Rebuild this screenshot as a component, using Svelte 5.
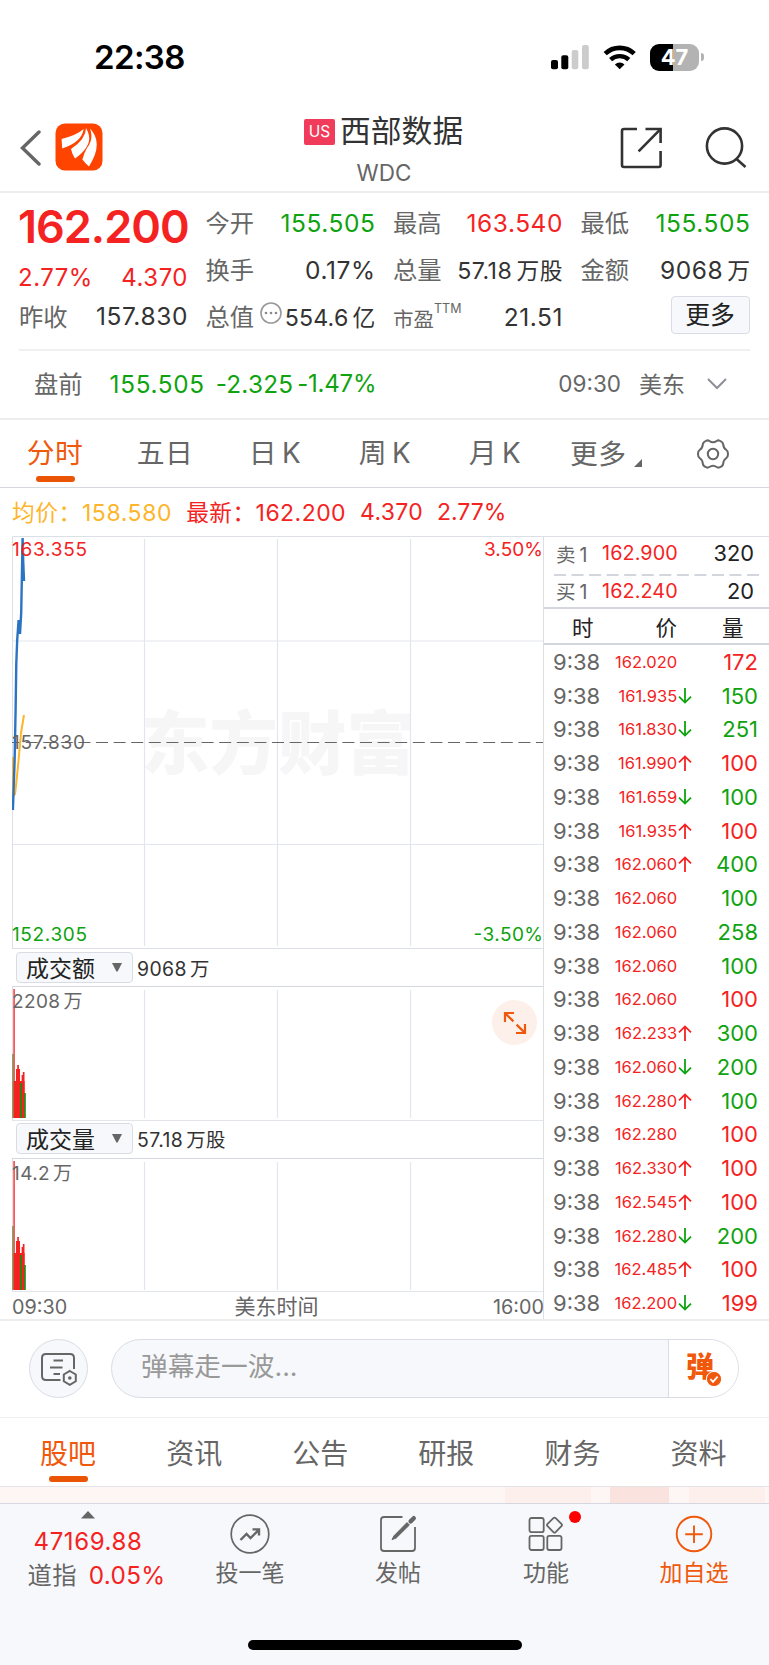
<script>
const stats = [
	[
		{ label: "今开", value: "155.505", color: "green" },
		{ label: "换手", value: "0.17%" },
		{ label: "总值", value: "554.6", unit: "亿", dots: true, small: true },
	],
	[
		{ label: "最高", value: "163.540", color: "red" },
		{ label: "总量", value: "57.18", unit: "万股", small: true },
		{ label: "市盈", sup: "TTM", value: "21.51" },
	],
	[
		{ label: "最低", value: "155.505", color: "green" },
		{ label: "金额", value: "9068", unit: "万" },
		{ more: true },
	],
];

const periods = ["分时", "五日", "日K", "周K", "月K"];

// price, direction of the tick, volume, color of the volume
const ticks = [
	["162.020", "", 172, "red"],
	["161.935", "down", 150, "green"],
	["161.830", "down", 251, "green"],
	["161.990", "up", 100, "red"],
	["161.659", "down", 100, "green"],
	["161.935", "up", 100, "red"],
	["162.060", "up", 400, "green"],
	["162.060", "", 100, "green"],
	["162.060", "", 258, "green"],
	["162.060", "", 100, "green"],
	["162.060", "", 100, "red"],
	["162.233", "up", 300, "green"],
	["162.060", "down", 200, "green"],
	["162.280", "up", 100, "green"],
	["162.280", "", 100, "red"],
	["162.330", "up", 100, "red"],
	["162.545", "up", 100, "red"],
	["162.280", "down", 200, "green"],
	["162.485", "up", 100, "red"],
	["162.200", "down", 199, "red"],
];

const indicators = [
	{ name: "成交额", value: "9068", unit: "万", max: "2208", zoom: true },
	{ name: "成交量", value: "57.18", unit: "万股", max: "14.2" },
];

// x, width, height, color
const bars = [
	[0.3, 1.4, 64, "#3a9a2e"],
	[1.2, 1.8, 129, "#f85a5a"],
	[1.6, 11, 37, "#f52222"],
	[4, 4, 49, "#f52222"],
	[5.2, 1.7, 53, "#f52222"],
	[9.6, 2, 43, "#f52222"],
	[10.8, 1.7, 46, "#f52222"],
	[8, 1.8, 35, "#1c8a10"],
	[12.2, 1.6, 25, "#1c8a10"],
];

const sections = ["股吧", "资讯", "公告", "研报", "财务", "资料"];
</script>

<div class="page">
	<div class="status">
		<div class="clock">22:38</div>
		<svg class="signal" width="39" height="25" viewBox="0 0 39 25">
			<rect x="0" y="15" width="7" height="9.3" rx="2" />
			<rect x="10.3" y="10.3" width="7" height="14" rx="2" />
			<rect x="20.7" y="5" width="6.6" height="19.3" rx="2" fill="#ccc" />
			<rect x="31" y="0" width="6.8" height="24.3" rx="2" fill="#ccc" />
		</svg>
		<svg class="wifi" width="34" height="25" viewBox="0 0 34 25">
			<path d="M2.2 8.7 A21 21 0 0 1 31.2 8.7" fill="none" stroke="#000" stroke-width="4.6" />
			<path d="M7.6 14.7 A13.4 13.4 0 0 1 25.8 14.7" fill="none" stroke="#000" stroke-width="4.4" />
			<path d="M16.7 24.3 L11.9 19.4 A7 7 0 0 1 21.5 19.4 Z" />
		</svg>
		<div class="battery">47</div>
		<div class="nub"></div>
	</div>

	<header>
		<svg class="back" width="22" height="36" viewBox="0 0 22 36">
			<path d="M19 2 L2.5 18 L19 34" fill="none" stroke="#666" stroke-width="3.4" stroke-linecap="round" />
		</svg>
		<svg class="logo" width="48" height="48" viewBox="0 0 48 48">
			<rect x="0.5" y="0.5" width="47" height="47" rx="9.5" fill="#ff4400" />
			<path d="M6.6 16 Q22 12 28.6 6 Q27 19 7.2 25.4 Z" fill="#fff" />
			<path d="M31 5 Q31 16 16 26 Q17 31 20 35.6 Q36 24 34 13 Q33 8 31 5 Z" fill="#fff" />
			<path d="M35 5.4 Q39 16 32 25 Q29 30 27.4 36.4 Q30 40 34 43.4 Q49 20 35 5.4 Z" fill="#fff" />
		</svg>
		<div class="title">
			<div class="name"><span class="us">US</span><span>西部数据</span></div>
			<div class="code">WDC</div>
		</div>
		<svg class="share" width="42" height="42" viewBox="0 0 42 42" fill="none" stroke="#333" stroke-width="2.6">
			<path d="M17 2 H4 Q2 2 2 4 V38 Q2 40 4 40 H38.6 Q40.6 40 40.6 38 V24" />
			<path d="M25.5 2 H40.6 V16" />
			<path d="M40 2.6 L18.6 24.4" />
		</svg>
		<svg class="search" width="42" height="42" viewBox="0 0 42 42" fill="none" stroke="#333" stroke-width="2.6">
			<circle cx="19.5" cy="19" r="17.6" />
			<path d="M31.5 32 L40.5 40" />
		</svg>
	</header>

	<section class="quote">
		<div class="columns">
			<div class="main">
				<div class="price red">162.200</div>
				<div class="change red"><span>2.77%</span><span>4.370</span></div>
				<div class="stat"><span class="label">昨收</span><span class="value">157.830</span></div>
			</div>
			{#each stats as column}
				<div class="column">
					{#each column as s}
						<div class="stat">
							{#if s.more}
								<button class="more">更多</button>
							{:else}
								<span class="label" class:pe={s.sup}>{s.label}{#if s.sup}<i>{s.sup}</i>{/if}</span>
								{#if s.dots}
									<svg class="dots" width="22" height="22" viewBox="0 0 22 22">
										<circle cx="11" cy="11" r="10" fill="none" stroke="#999" stroke-width="1.6" />
										<circle cx="6" cy="11" r="1.3" fill="#888" />
										<circle cx="11" cy="11" r="1.3" fill="#888" />
										<circle cx="16" cy="11" r="1.3" fill="#888" />
									</svg>
								{/if}
								<span class="value {s.color}" class:small={s.small}>{s.value}{#if s.unit}<b>{s.unit}</b>{/if}</span>
							{/if}
						</div>
					{/each}
				</div>
			{/each}
		</div>
		<div class="premarket">
			<span class="label">盘前</span>
			<span class="green p1">155.505</span>
			<span class="green p2">-2.325</span>
			<span class="green p3">-1.47%</span>
			<span class="open">09:30</span>
			<span class="zone">美东</span>
			<svg width="22" height="14" viewBox="0 0 22 14">
				<path d="M2 2 L11 11 L20 2" fill="none" stroke="#8e8e96" stroke-width="2" />
			</svg>
		</div>
	</section>

	<nav class="periods">
		{#each periods as p, i}
			<div class="period" class:active={i == 0}>{p[0]}<span class:latin={p[1] == "K"}>{p[1]}</span></div>
		{/each}
		<div class="period wide">更多<svg width="8" height="8" viewBox="0 0 8 8"><path d="M8 0 V8 H0 Z" fill="#666" /></svg></div>
		<div class="gear">
			<svg width="32" height="30" viewBox="0 0 32 30" fill="none" stroke="#666" stroke-width="2">
				<path d="M9.5 1.6 Q11 1 12.4 2 Q16 4.6 19.6 2 Q21 1 22.5 1.6 Q26 3 26.2 5.4 Q26.4 9 29.4 11 Q31 12 31 15 Q31 18 29.4 19 Q26.4 21 26.2 24.6 Q26 27 22.5 28.4 Q21 29 19.6 28 Q16 25.4 12.4 28 Q11 29 9.5 28.4 Q6 27 5.8 24.6 Q5.6 21 2.6 19 Q1 18 1 15 Q1 12 2.6 11 Q5.6 9 5.8 5.4 Q6 3 9.5 1.6 Z" />
				<circle cx="16" cy="15" r="5.2" />
			</svg>
		</div>
	</nav>

	<div class="summary">
		<span class="avg"><em>均价：</em>158.580</span>
		<span class="red last"><em>最新：</em>162.200</span>
		<span class="red diff">4.370</span>
		<span class="red percent">2.77%</span>
	</div>

	<div class="market">
		<div class="charts">
			<svg class="line" width="531" height="413" viewBox="0 0 531 413">
				<text class="watermark" x="129" y="233" textLength="274" lengthAdjust="spacingAndGlyphs">东方财富</text>
				<path d="M132.5 3 V410 M265.5 3 V410 M398.5 3 V410 M0 105 H532 M0 308.5 H532" stroke="#e2e5ee" stroke-width="1.2" fill="none" />
				<path d="M0.5 413 V0.5 H532 M0 412.5 H532" stroke="#dcdfe6" fill="none" />
				<path d="M0 206.5 H532" stroke="#666" stroke-width="1.2" stroke-dasharray="12 5.6" fill="none" stroke-dashoffset="4" />
				<path d="M0.8 221 L1.2 260 L3 258 L4.2 248 L6.3 227 L9 197 L12 179" stroke="#fdb52b" stroke-width="2" fill="none" />
				<path d="M0.9 274 L2.6 225 L3.6 174 L4.3 127 L5.2 104 L6.6 84 L8 98 L9.2 77 L10.6 2 L11.2 25 L12 45" stroke="#2c73c4" stroke-width="2.4" fill="none" />
				<text class="scale rise" x="0" y="19.5" textLength="75">163.355</text>
				<text class="scale rise" x="472" y="19.5" textLength="59">3.50%</text>
				<text class="scale" x="0" y="212.5" textLength="73">157.830</text>
				<text class="scale fall" x="0" y="405" textLength="75">152.305</text>
				<text class="scale fall" x="461.5" y="405" textLength="69.5">-3.50%</text>
			</svg>
			{#each indicators as ind}
				<div class="indicator">
					<button>{ind.name}<svg width="10" height="9" viewBox="0 0 10 9"><path d="M0 0 H10 L5.6 8.4 H4.4 Z" fill="#666" /></svg></button>
					<span>{ind.value}<b>{ind.unit}</b></span>
				</div>
				<div class="volume">
					<svg width="531" height="133" viewBox="0 0 531 133">
						<path d="M132.5 3 V131 M265.5 3 V131 M398.5 3 V131" stroke="#e2e5ee" stroke-width="1.2" />
						<path d="M0.5 0 V134" stroke="#dcdfe6" />
						{#each bars as [x, w, h, fill]}
							<rect {x} y={131 - h} width={w} height={h} {fill} />
						{/each}
					</svg>
					<span class="max">{ind.max}<b>万</b></span>
					{#if ind.zoom}
						<div class="zoom">
							<svg width="24" height="24" viewBox="0 0 24 24" fill="none" stroke="#f0590c" stroke-width="2.2">
								<path d="M2 11 V2 H11 M2.4 2.4 L10.4 10.4 M22 13 V22 H13 M21.6 21.6 L13.6 13.6" />
							</svg>
						</div>
					{/if}
				</div>
			{/each}
			<div class="axis"><span>09:30</span><span class="tz">美东时间</span><span>16:00</span></div>
		</div>

		<div class="book">
			<div class="order"><span class="side">卖<b>1</b></span><span class="red quoted">162.900</span><span class="size">320</span></div>
			<svg class="dash" width="205" height="2"><path d="M0 1 H205" stroke="#d3d6dc" stroke-width="2" stroke-dasharray="12 5.55" /></svg>
			<div class="order bid"><span class="side">买<b>1</b></span><span class="red quoted">162.240</span><span class="size">20</span></div>
			<div class="heads"><span>时</span><span>价</span><span>量</span></div>
			{#each ticks as [price, dir, vol, color]}
				<div class="tick">
					<span class="time">9:38</span>
					<span class="deal red">{price}</span>
					<svg width="14" height="16" viewBox="0 0 14 16" fill="none" stroke-width="1.8">
						{#if dir == "up"}
							<path d="M7 16 V1.6 M1 7.4 L7 1.4 L13 7.4" stroke="#f52222" />
						{:else if dir == "down"}
							<path d="M7 0 V14.4 M1 8.6 L7 14.6 L13 8.6" stroke="#0fa30f" />
						{/if}
					</svg>
					<span class="vol {color}">{vol}</span>
				</div>
			{/each}
		</div>
	</div>

	<div class="danmu">
		<div class="settings">
			<svg width="38" height="36" viewBox="0 0 38 36" fill="none" stroke="#666" stroke-width="2">
				<path d="M20.5 29 H6 Q2 29 2 25 V7 Q2 3 6 3 H30 Q34 3 34 7 V18" />
				<path d="M13.5 9.6 H23 M10 16.4 H22.5 M13.5 23 H20" />
				<path d="M29.8 20 L35.8 23.5 V30.3 L29.8 33.8 L23.8 30.3 V23.5 Z" />
				<circle cx="29.8" cy="27" r="1.8" fill="#666" stroke="none" />
			</svg>
		</div>
		<div class="input">
			<span class="placeholder">弹幕走一波...</span>
			<div class="send">
				<span>弹</span>
				<svg width="16" height="16" viewBox="0 0 16 16">
					<circle cx="8" cy="8" r="7.6" fill="#f0590c" stroke="#fff" stroke-width="1" />
					<path d="M4.4 8 L7 10.8 L11.6 5.6" fill="none" stroke="#fff" stroke-width="1.8" />
				</svg>
			</div>
		</div>
	</div>

	<nav class="sections">
		{#each sections as s, i}
			<div class:active={i == 0}>{s}</div>
		{/each}
	</nav>
	<div class="banner"><i class="a"></i><i class="b"></i><i class="c"></i></div>

	<footer>
		<div class="index">
			<svg width="14" height="8" viewBox="0 0 14 8"><path d="M7 0 L14 7.5 H0 Z" fill="#666" /></svg>
			<div class="red points">47169.88</div>
			<div class="dow"><span>道指</span><span class="red">0.05%</span></div>
		</div>
		<div class="action">
			<svg width="40" height="40" viewBox="0 0 40 40" fill="none" stroke="#666" stroke-width="1.7">
				<circle cx="20" cy="20" r="18.8" />
				<path d="M10.5 26 L16.5 20 L20.5 24 L28.5 16.2 M22.5 15.4 H29 V21.6" stroke-width="2.4" />
			</svg>
			<span>投一笔</span>
		</div>
		<div class="action">
			<svg width="40" height="40" viewBox="0 0 40 40" fill="none" stroke="#666" stroke-width="1.8">
				<path d="M24.5 3 H6 Q3 3 3 6 V34 Q3 37 6 37 H34 Q37 37 37 34 V13" />
				<path d="M14 25.6 L16 21.8 L29 8.6 L31.4 11 L18.2 24 Z" fill="#666" stroke-width="1" />
				<path d="M32.6 7.4 L35.8 4.2" stroke-width="4.4" stroke-linecap="round" />
			</svg>
			<span>发帖</span>
		</div>
		<div class="action">
			<svg width="40" height="40" viewBox="0 0 40 40" fill="none" stroke="#666" stroke-width="1.8">
				<rect x="3.5" y="4" width="14.2" height="14.2" rx="2" />
				<rect x="3.5" y="21.8" width="14.2" height="14.2" rx="2" />
				<rect x="21.3" y="21.8" width="14.2" height="14.2" rx="2" />
				<rect x="22.8" y="5.4" width="11.4" height="11.4" rx="1.6" transform="rotate(45 28.5 11.1)" />
			</svg>
			<span>功能</span>
			<div class="badge"></div>
		</div>
		<div class="action add">
			<svg width="40" height="40" viewBox="0 0 40 40" fill="none" stroke="#f0590c" stroke-width="1.9">
				<circle cx="20" cy="20" r="17.3" />
				<path d="M20 11.5 V29 M11.2 20.3 H28.8" />
			</svg>
			<span>加自选</span>
		</div>
	</footer>
	<div class="home"><div></div></div>
</div>

<style>
:global(body) {
	background: white;
}

.page {
	width: 769px;
	height: 1665px;
	overflow: hidden;
	display: flex;
	flex-direction: column;
	background: white;
	color: #333;
	font-family: Inter, "Noto Sans CJK SC", sans-serif;
	font-size: 24px;
	white-space: nowrap;
}

.page * {
	box-sizing: border-box;
}

svg {
	display: block;
	flex: none;
}

b, i, em {
	font-weight: inherit;
	font-style: normal;
}

button {
	font: inherit;
	color: inherit;
	background: #f6f8fb;
	border: 1px solid #d9dce4;
	border-radius: 4px;
	padding: 0;
}

.red { color: #f52222; }
.green { color: #0fa30f; }

.status {
	height: 114px;
	display: flex;
	align-items: center;
	padding-left: 94px;
}

.clock {
	width: 457px;
	font-size: 33px;
	font-weight: 600;
	color: black;
	letter-spacing: -0.6px;
}

.wifi {
	margin-left: 13px;
}

.battery {
	width: 49px;
	height: 27px;
	margin-left: 13px;
	border-radius: 9px;
	background: linear-gradient(to right, black 23px, #b3b3b3 23px);
	color: white;
	font-size: 22px;
	font-weight: 700;
	line-height: 27px;
	text-align: center;
}

.nub {
	width: 3px;
	height: 8px;
	margin-left: 2px;
	border-radius: 0 4px 4px 0;
	background: #b3b3b3;
}

header {
	height: 79px;
	display: flex;
	align-items: flex-start;
	border-bottom: 2px solid #ededed;
	padding-left: 20px;
}

.back { margin-top: 16px; }
.logo { margin: 9px 0 0 13px; }

.title {
	width: 160px;
	margin: 0 156px 0 201px;
}

.name {
	display: flex;
	align-items: center;
	height: 36px;
	font-size: 30.8px;
	line-height: 32px;
}

.name span + span {
	margin-top: -2px;
}

.us {
	width: 31px;
	height: 26px;
	margin-right: 5px;
	border-radius: 2px;
	background: #f03c5a;
	color: white;
	font-size: 15.5px;
	line-height: 26px;
	text-align: center;
}

.code {
	height: 44px;
	font-size: 22.5px;
	line-height: 45px;
	text-align: center;
	color: #666;
}

.share { margin-top: 13px; }
.search { margin: 13px 0 0 43px; }

.columns {
	height: 158px;
	margin: 0 19px;
	display: grid;
	grid-template-columns: 168px 169px 169px 169px;
	column-gap: 18.5px;
	border-bottom: 2px solid #f0f0f2;
}

.column, .main {
	padding-top: 6px;
}

.stat {
	height: 47px;
	display: flex;
	align-items: center;
	justify-content: space-between;
}

.label {
	color: #666;
	font-size: 24.3px;
	margin-top: -2px;
}

.label i {
	font-size: 12.5px;
	position: relative;
	top: -14px;
}

.label.pe {
	font-size: 20.5px;
	margin-top: 3px;
}

.value {
	margin-right: -1px;
	font-size: 24.5px;
	letter-spacing: 0.55px;
}

.small {
	font-size: 23.2px;
	letter-spacing: 0.5px;
}

.value b {
	font-size: 22.8px;
	margin-left: 4px;
}

.dots {
	margin: -8px -2px 0 0;
}

.dots + .value {
	margin-left: -1px;
	letter-spacing: 0.2px;
}

.main .stat {
	height: 34px;
}

.main .value {
	letter-spacing: 0.6px;
}

.price {
	margin-left: -1px;
	height: 56px;
	line-height: 56px;
	font-size: 45px;
	font-weight: 600;
	letter-spacing: -1px;
}

.change {
	margin: 0 -1px;
	height: 44px;
	line-height: 45px;
	letter-spacing: 0.5px;
	display: flex;
	justify-content: space-between;
}

.more {
	width: 79px;
	height: 38px;
	margin: -4px 0 0 auto;
	font-size: 24.8px;
	line-height: 34px;
	color: #222;
}

.premarket {
	height: 69px;
	padding: 0 41px 2px 34px;
	display: flex;
	align-items: center;
	border-bottom: 2px solid #ededed;
}

.p1, .p2 {
	font-size: 24.3px;
	letter-spacing: 0.7px;
}

.p1 { margin-left: 27px; }
.p2 { margin-left: 11px; letter-spacing: 0.2px; }
.p3 { margin-left: 4px; letter-spacing: -0.2px; }

.open {
	margin-left: auto;
	color: #666;
	font-size: 22.5px;
}

.zone {
	margin: -2px 21px 0 18px;
	color: #666;
	font-size: 23px;
}

.periods {
	height: 68px;
	display: flex;
	border-bottom: 1px solid #d5d8e0;
	color: #666;
	font-size: 27.8px;
	line-height: 66px;
}

.period {
	width: 110px;
	text-align: center;
	letter-spacing: 0.5px;
}

.period .latin {
	margin-left: 5px;
}

.wide {
	width: 118px;
	display: flex;
	align-items: center;
	padding-left: 20px;
}

.wide svg {
	margin: 18px 0 0 7px;
}

.gear {
	width: 92px;
	display: flex;
	justify-content: center;
	align-items: center;
	padding-right: 3px;
}

.active {
	color: #f0590c;
}

.active::after {
	content: "";
	display: block;
	width: 39px;
	height: 6px;
	margin: -10px auto 0;
	border-radius: 3px;
	background: #e95504;
}

.summary {
	height: 48px;
	padding: 0 0 1px 12px;
	display: flex;
	align-items: center;
	font-size: 23px;
	letter-spacing: 0.6px;
}

.summary em {
	font-size: 22.7px;
}

.avg { color: #fdb52b; }

.last {
	margin-left: 14px;
	letter-spacing: 0.45px;
}

.diff {
	margin: 0 14px;
	letter-spacing: 0.3px;
}

.percent {
	letter-spacing: 0;
}

.market {
	height: 785px;
	display: flex;
	border-bottom: 2px solid #ededed;
}

.charts {
	width: 531px;
	margin-left: 12px;
}

.line text {
	font-size: 19px;
}

.scale { fill: #666; }
.rise { fill: #f52222; }
.fall { fill: #0fa30f; }

.line .watermark {
	font-size: 69px;
	font-weight: 900;
	fill: #f6f6f7;
}

.indicator {
	height: 38px;
	padding: 0 0 1px 4px;
	display: flex;
	align-items: center;
	border-bottom: 1px solid #d5d8e0;
}

.indicator button {
	width: 117px;
	height: 31px;
	padding: 0 10px 1px 9px;
	display: flex;
	align-items: center;
	justify-content: space-between;
	font-size: 23px;
	color: #222;
}

.indicator button svg {
	margin-top: 1px;
}

.indicator span {
	margin-left: 4px;
	font-size: 19.4px;
	letter-spacing: 0.4px;
}

.indicator b, .max b {
	margin-left: 3px;
}

.volume {
	height: 133.5px;
	position: relative;
	border-bottom: 1px solid #e2e5ea;
}

.max {
	position: absolute;
	left: 0;
	top: -1px;
	font-size: 19px;
	letter-spacing: 0.4px;
	color: #666;
}

.zoom {
	position: absolute;
	right: 6px;
	top: 13px;
	width: 45px;
	height: 45px;
	border-radius: 50%;
	background: #fdf0ea;
	display: flex;
	align-items: center;
	justify-content: center;
}

.axis {
	height: 29px;
	display: flex;
	align-items: center;
	justify-content: space-between;
	margin-right: -1px;
	color: #666;
	font-size: 19.8px;
}

.tz {
	margin: -3px 7px 0 0;
	font-size: 21px;
}

.book {
	width: 226px;
	border-left: 1px solid #dcdfe6;
	border-top: 1px solid #dcdfe6;
}

.order {
	height: 37px;
	padding: 0 15px 5px 12px;
	display: flex;
	align-items: center;
}

.order.bid {
	height: 31px;
	padding-bottom: 2px;
}

.side {
	width: 46px;
	font-size: 19.5px;
	color: #666;
}

.side b {
	margin-left: 4px;
}

.quoted {
	font-size: 19.8px;
	letter-spacing: 0.1px;
}

.size {
	margin-left: auto;
	font-size: 21.8px;
	color: #222;
}

.dash {
	margin-left: 10px;
}

.heads {
	height: 38px;
	border-top: 2px solid #d3d6dc;
	border-bottom: 2px solid #d3d6dc;
	padding: 3px 23px 0 28px;
	display: flex;
	align-items: center;
	color: #222;
	font-size: 21.5px;
	line-height: 30px;
}

.heads span:nth-child(2) {
	margin: 0 45px 0 62px;
}

.tick {
	height: 33.75px;
	padding: 0 11px 0 9px;
	display: flex;
	align-items: center;
	font-size: 22px;
}

.time { color: #666; }

.deal {
	width: 77px;
	text-align: right;
	font-size: 16.5px;
}

.tick svg {
	margin-left: 1px;
}

.vol {
	margin-left: auto;
}

.danmu {
	height: 97px;
	padding: 0 30px 1px 29px;
	display: flex;
	align-items: center;
	border-bottom: 1px solid #f0f0f2;
}

.settings {
	width: 59px;
	height: 59px;
	border: 1px solid #d9dce4;
	border-radius: 50%;
	background: #f6f8fb;
	padding: 11px 0 0 10px;
}

.input {
	flex: 1;
	height: 59px;
	margin-left: 23px;
	border: 1px solid #d9dce4;
	border-radius: 30px;
	background: #f6f8fb;
	overflow: hidden;
	display: flex;
	justify-content: space-between;
}

.placeholder {
	padding-left: 29px;
	line-height: 53px;
	font-size: 26.7px;
	color: #999;
}

.send {
	width: 70px;
	background: white;
	border-left: 1px solid #d9dce4;
	position: relative;
	padding-left: 17px;
	line-height: 55px;
	font-size: 28px;
	font-weight: 900;
	color: #f0590c;
}

.send svg {
	position: absolute;
	left: 37px;
	top: 31px;
}

.sections {
	height: 69px;
	padding: 0 5px;
	display: grid;
	grid-template-columns: repeat(6, 126.1px);
	border-bottom: 1px solid #e4e4e8;
	text-align: center;
	color: #666;
	font-size: 28px;
	line-height: 72px;
}

.sections .active::after {
	margin-top: -14px;
}

.banner {
	height: 17px;
	display: flex;
	background: #fef6f4;
	padding-left: 505px;
	border-bottom: 1px solid #d5d8e0;
}

.a { width: 86px; background: #fdefec; }
.b { width: 59px; background: #fae3de; margin: 0 20px 0 19px; }
.c { width: 76px; background: #fdefec; }

footer {
	height: 122px;
	display: flex;
	background: #f6f8fb;
	color: #666;
}

.index {
	width: 176px;
	display: flex;
	flex-direction: column;
	align-items: center;
	padding-top: 7px;
}

.points {
	height: 44px;
	line-height: 45px;
	letter-spacing: 0.6px;
}

.dow {
	height: 24px;
	line-height: 24px;
	display: flex;
	gap: 12px;
	padding-left: 17px;
	font-size: 24.3px;
	letter-spacing: 0.3px;
}

.action {
	width: 148px;
	display: flex;
	flex-direction: column;
	align-items: center;
	padding-top: 10px;
	font-size: 23px;
	position: relative;
}

.action span {
	line-height: 39px;
}

.add { color: #f0590c; }

.badge {
	position: absolute;
	right: 39px;
	top: 7px;
	width: 12px;
	height: 12px;
	border-radius: 50%;
	background: #ff0000;
}

.home {
	flex: 1;
	background: #f6f8fb;
}

.home div {
	width: 274px;
	height: 10px;
	margin: 14px 0 0 248px;
	border-radius: 5px;
	background: black;
}
</style>
